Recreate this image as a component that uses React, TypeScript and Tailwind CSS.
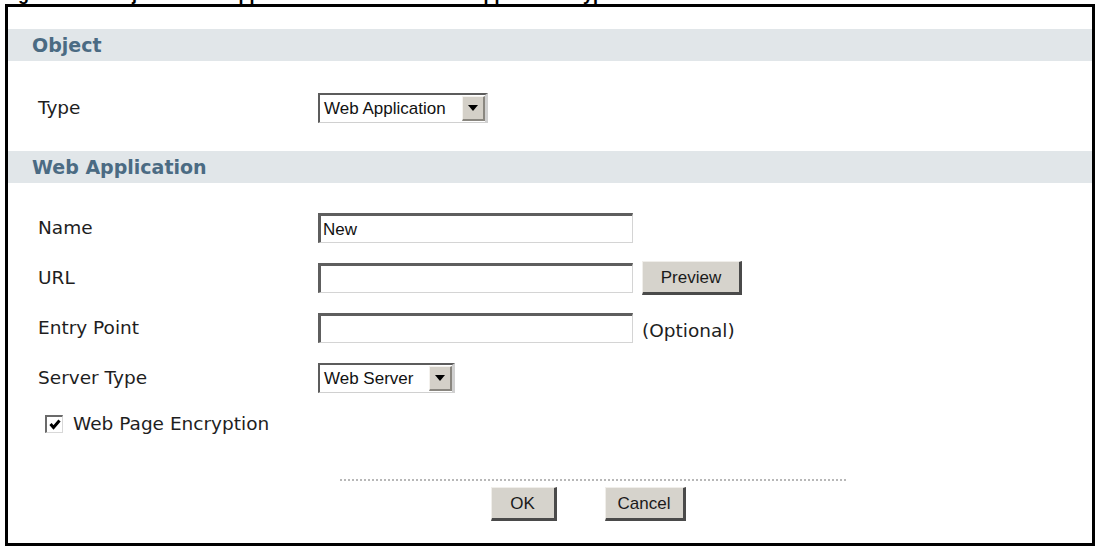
import React from "react";

const label = "text-[18.5px] text-[#1e1e1e] leading-none";
const labelFont = { fontFamily: '"DejaVu Sans", Verdana, sans-serif' } as React.CSSProperties;
const arialFont = { fontFamily: '"Liberation Sans", Arial, sans-serif' } as React.CSSProperties;

function SectionBar({ title }: { title: string }) {
  return (
    <div className="h-[32px] bg-[#e1e6e9] flex items-center pl-[24px]">
      <span
        className="text-[19px] font-bold text-[#4b6b83] leading-none"
        style={{ fontFamily: '"DejaVu Sans", Verdana, sans-serif' }}
      >
        {title}
      </span>
    </div>
  );
}

function Arrow() {
  return (
    <div className="w-[23px] h-full bg-[#d4d0c8] border-t border-l border-t-[#f4f2ee] border-l-[#f4f2ee] border-b-2 border-r-2 border-b-[#8a8780] border-r-[#8a8780] flex items-center justify-center">
      <svg width="10" height="6" viewBox="0 0 10 6">
        <polygon points="0,0 10,0 5,6" fill="#000" />
      </svg>
    </div>
  );
}

function Select({ value, width }: { value: string; width: string }) {
  return (
    <div
      className={`${width} h-[30px] border-t-2 border-l-2 border-t-[#5c5c5c] border-l-[#5c5c5c] border-b border-r-[3px] border-b-[#d0d0d0] border-r-[#d0d0d0] bg-white flex items-stretch`}
    >
      <div className="flex-1 flex items-center pl-[4px] text-[17px] text-[#111] leading-none whitespace-nowrap overflow-hidden" style={arialFont}>
        {value}
      </div>
      <div className="py-[1px] flex">
        <Arrow />
      </div>
    </div>
  );
}

function TextInput({ value }: { value?: string }) {
  return (
    <div className="w-[315px] h-[30px] border-t-[3px] border-l-[3px] border-t-[#5e5e5e] border-l-[#5e5e5e] border-b border-r border-b-[#d4d4d4] border-r-[#d4d4d4] bg-white flex items-center pl-[2px] text-[17px] text-[#111] leading-none" style={arialFont}>
      {value}
    </div>
  );
}

function Button({ text, width }: { text: string; width: string }) {
  return (
    <div
      className={`${width} h-[34px] bg-[#d6d3cc] border-t border-l border-t-[#f0eeea] border-l-[#f0eeea] border-b-[3px] border-r-[3px] border-b-[#4a4a4a] border-r-[#4a4a4a] flex items-center justify-center text-[17px] text-[#1a1a1a] leading-none`}
      style={arialFont}
    >
      {text}
    </div>
  );
}

function Row({ name, children, h = "h-[50px]" }: { name: string; children: React.ReactNode; h?: string }) {
  return (
    <div className={`${h} flex items-center`}>
      <div className={`w-[310px] pl-[30px] ${label}`} style={labelFont}>
        {name}
      </div>
      <div className="flex items-center">{children}</div>
    </div>
  );
}

export default function App() {
  return (
    <div className="w-[1098px] h-[548px] bg-white overflow-hidden">
      <div className="h-[4px] overflow-hidden">
        <div
          className="-mt-[15px] pl-[2px] text-[18px] font-bold text-black whitespace-nowrap leading-[18px]"
          style={arialFont}
        >
          Figure 297&nbsp;&nbsp;&nbsp;Object &gt; Web Application &gt; Add/Edit: Web Application Type
        </div>
      </div>
      <div className="ml-[5px] w-[1090px] h-[542px] border-[3px] border-black flex flex-col">
        <div className="h-[22px]" />
        <SectionBar title="Object" />
        <div className="h-[90px] flex items-center pt-[4px]">
          <div className={`w-[310px] pl-[30px] ${label}`} style={labelFont}>
            Type
          </div>
          <Select value="Web Application" width="w-[170px]" />
        </div>
        <SectionBar title="Web Application" />
        <div className="h-[20px]" />
        <Row name="Name">
          <TextInput value="New" />
        </Row>
        <Row name="URL">
          <TextInput />
          <div className="ml-[9px]">
            <Button text="Preview" width="w-[100px]" />
          </div>
        </Row>
        <Row name="Entry Point">
          <TextInput />
          <span className={`ml-[9px] ${label} pt-[6px]`} style={labelFont}>
            (Optional)
          </span>
        </Row>
        <Row name="Server Type">
          <Select value="Web Server" width="w-[137px]" />
        </Row>
        <div className="h-[42px] flex items-center pl-[37px]">
          <div className="w-[18px] h-[18px] border-t-2 border-l-2 border-t-[#6a6a6a] border-l-[#6a6a6a] border-b border-r border-b-[#d8d8d8] border-r-[#d8d8d8] bg-white flex items-center justify-center">
            <svg width="12" height="11" viewBox="0 0 12 11">
              <polyline points="1.5,5 4.5,8.5 10.5,1.5" fill="none" stroke="#000" strokeWidth="3" />
            </svg>
          </div>
          <span className={`ml-[10px] ${label}`} style={labelFont}>
            Web Page Encryption
          </span>
        </div>
        <div className="h-[34px]" />
        <div className="pl-[332px]">
          <div className="w-[506px] border-t-2 border-dotted border-[#b8b8b8]" />
          <div className="w-[506px] flex justify-center gap-[48px] pt-[6px] pr-[10px]">
            <Button text="OK" width="w-[66px]" />
            <Button text="Cancel" width="w-[81px]" />
          </div>
        </div>
      </div>
    </div>
  );
}
